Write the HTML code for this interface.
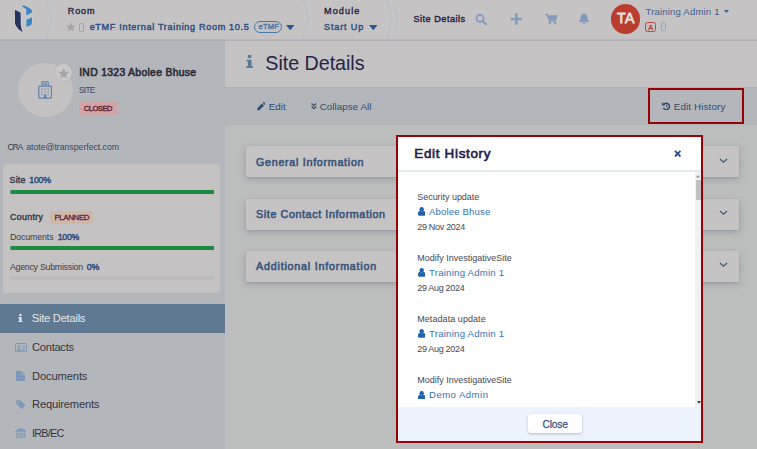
<!DOCTYPE html>
<html lang="en">
<head>
<meta charset="utf-8">
<title>Site Details - Edit History</title>
<style>
*{box-sizing:border-box;margin:0;padding:0}
html,body{width:757px;height:449px;overflow:hidden;background:#bcbebd;font-family:"Liberation Sans","DejaVu Sans",sans-serif;color:#2d2d3a}
.a,.t{position:absolute;white-space:nowrap}
.t{line-height:1}
#page{position:relative;width:757px;height:449px;overflow:hidden;background:#bcbebd}
.card{left:246px;width:493px;height:31px;background:#c5c3c4;border-radius:1.500px;box-shadow:0 2px 7px rgba(75,80,105,.3),0 1px 2px rgba(75,80,105,.12)}
.bar{left:9.5px;width:204.2px;height:4px;border-radius:2px 0 0 2px;background:#1d8b41}
</style>
</head>
<body>
<div id="page">

<!-- ================= HEADER ================= -->
<div class="a" style="left:0;top:0;width:757px;height:39px;background:#c5c3c4"></div>
<div class="a" style="left:0;top:39px;width:225px;height:2px;background:linear-gradient(#b0b3ba 0,#b0b3ba 50%,#a8acb5 50%,#a8acb5 100%)"></div>
<div class="a" style="left:225px;top:39px;width:532px;height:2px;background:linear-gradient(#b9b7bb 0,#b9b7bb 50%,#b2b0b5 50%,#b2b0b5 100%)"></div>
<!-- logo -->
<svg class="a" style="left:0;top:0" width="60" height="40" viewBox="0 0 60 40">
  <g stroke="#d3d1d2" stroke-width="1.400" stroke-linejoin="round" paint-order="stroke">
  <path d="M14.900 9.700 L20.600 12.400 L20.800 25.500 Q21.200 29 22.900 32 Q17 29.200 15 23.800 Z" fill="#25345f"/>
  <path d="M21.300 6.100 L24.400 5.300 L30.400 8.600 Q32 9.600 32 11.200 L32 12.600 L26.200 15.800 L26.200 9.300 Z" fill="#3f86c2"/>
  <path d="M26.200 19.800 L32 17.200 L32 23.300 Q32 24.600 30.600 25.200 L26.500 27 Z" fill="#3f86c2"/>
  </g>
</svg>
<!-- separators -->
<svg class="a" style="left:0;top:0" width="757" height="40" viewBox="0 0 757 40" fill="none" stroke="#b0bbcb" stroke-width=".9">
  <path d="M46.300 0 L51.600 18.500 L45.900 40"/>
  <path d="M303.100 0 L308.700 18.500 L302 40"/>
  <path d="M387 0 L391.900 18.500 L386.600 40"/>
  <path d="M394.500 7.300 L397.800 18.500 L394.500 30.400"/>
</svg>

<div class="t" id="t_room" style="left:67.75px;top:6.90px;font-size:9.1px;-webkit-text-stroke:0.41px #2e2a42;color:#2e2a42;letter-spacing:0.848px">Room</div>
<svg class="a" style="left:65.500px;top:22px" width="10" height="10" viewBox="0 0 24 24"><path d="M12 .8l3.400 7.400 8 .9-6 5.400 1.700 7.900L12 18.400l-7.100 4 1.700-7.900-6-5.400 8-.9z" fill="#a6a5a7"/></svg>
<div class="a" style="left:79.200px;top:23px;width:5.200px;height:8.800px;border:1px solid #8aa5c5;border-width:1.400px 1px;border-radius:1.500px"></div>
<div class="t" id="t_roomname" style="left:89.64px;top:23.00px;font-size:9.1px;-webkit-text-stroke:0.41px #2c4d80;color:#2c4d80;letter-spacing:0.668px">eTMF Internal Training Room 10.5</div>
<div class="a" style="left:254px;top:20.500px;width:28px;height:12.500px;border:1px solid #4a78a6;border-radius:6.500px"></div>
<div class="t" id="t_etmf" style="left:258.53px;top:23.44px;font-size:7.4px;-webkit-text-stroke:0.44px #4b7aa8;color:#4b7aa8;letter-spacing:0.281px">eTMF</div>
<svg class="a" style="left:286px;top:25px" width="8.500" height="5.500" viewBox="0 0 8.500 5.500"><path d="M0 0h8.500L4.250 5.300z" fill="#2a5793"/></svg>

<div class="t" id="t_module" style="left:324.05px;top:6.90px;font-size:9.1px;-webkit-text-stroke:0.41px #2e2a42;color:#2e2a42;letter-spacing:1.096px">Module</div>
<div class="t" id="t_startup" style="left:324.05px;top:23.00px;font-size:9.1px;-webkit-text-stroke:0.41px #2c4d80;color:#2c4d80;letter-spacing:0.836px">Start Up</div>
<svg class="a" style="left:369.200px;top:25px" width="8.500" height="5.500" viewBox="0 0 8.500 5.500"><path d="M0 0h8.500L4.250 5.300z" fill="#2a5793"/></svg>

<div class="t" id="t_sd" style="left:413.44px;top:14.70px;font-size:9.1px;-webkit-text-stroke:0.41px #2a2445;color:#2a2445;letter-spacing:0.519px">Site Details</div>

<!-- search -->
<svg class="a" style="left:475px;top:13px" width="13" height="13" viewBox="0 0 13 13"><circle cx="5" cy="5.300" r="3.500" fill="none" stroke="#859ebf" stroke-width="1.900"/><path d="M7.900 8.300L10.900 11.300" stroke="#859ebf" stroke-width="2.300" stroke-linecap="round"/></svg>
<!-- plus -->
<svg class="a" style="left:510px;top:12px" width="13" height="14" viewBox="0 0 13 14"><path d="M6.400 1.200v11.500M.7 6.950h11.400" stroke="#829bbd" stroke-width="2.400"/></svg>
<!-- cart -->
<svg class="a" style="left:545px;top:13px" width="13" height="12" viewBox="0 0 13 12"><path d="M.5 .9h2.200l.5 1.400h9.300l-1.400 5.200H4.300z" fill="#829bbd"/><path d="M.5 1.300h1.900l2 7.200h6.600" fill="none" stroke="#829bbd" stroke-width="1.200"/><circle cx="4.900" cy="10.300" r="1.200" fill="#829bbd"/><circle cx="10.100" cy="10.300" r="1.200" fill="#829bbd"/></svg>
<!-- bell -->
<svg class="a" style="left:578.500px;top:13px" width="10" height="12" viewBox="0 0 10 12"><path d="M5 .1c.6 0 .9.400.9.900 1.700.5 2.600 1.900 2.600 3.700 0 2.100.7 3 1.400 3.700v.9H.1v-.9C.8 7.700 1.500 6.800 1.500 4.700c0-1.800.9-3.200 2.600-3.700 0-.5.300-.9.900-.9z" fill="#829bbd"/><path d="M3.600 10.100h2.800a1.400 1.400 0 0 1-2.800 0z" fill="#829bbd"/></svg>

<!-- avatar -->
<div class="a" style="left:610.800px;top:4.300px;width:29.400px;height:29.400px;border-radius:15px;background:#b93e30"></div>
<div class="t" id="t_ta" style="left:617.10px;top:11.45px;font-size:14.0px;-webkit-text-stroke:0.84px #e9dedb;color:#e9dedb;letter-spacing:0.441px">TA</div>
<div class="t" id="t_admin" style="left:645.52px;top:6.77px;font-size:9.6px;color:#3f5f8f;letter-spacing:0.155px">Training Admin 1</div>
<svg class="a" style="left:724.200px;top:10.300px" width="5" height="3.200" viewBox="0 0 5 3.200"><path d="M0 0h5L2.500 3z" fill="#3f5f8f"/></svg>
<div class="a" style="left:645.300px;top:21.800px;width:10.800px;height:10px;border:1px solid #b8483f;border-radius:2.500px"></div>
<div class="t" id="t_abadge" style="left:648.24px;top:23.51px;font-size:7.2px;-webkit-text-stroke:0.43px #b8483f;color:#b8483f;letter-spacing:0.000px">A</div>
<div class="a" style="left:661px;top:22.300px;width:5.200px;height:8.400px;border:1px solid #8aa5c5;border-width:1.400px 1px;border-radius:1.500px"></div>

<!-- ================= SIDEBAR ================= -->
<div class="a" style="left:0;top:41px;width:225px;height:408px;background:#b3b7bc"></div>
<div class="a" style="left:18px;top:62.500px;width:54.600px;height:54.600px;border-radius:28px;background:#c3c1c2"></div>
<!-- building icon -->
<svg class="a" style="left:38.200px;top:80.700px" width="14.300" height="18" viewBox="0 0 14.300 18" fill="none" stroke="#6283a7">
  <path d="M4.100 5.200V.7h6.100v4.500" stroke-width="1.100"/>
  <rect x=".8" y="5.200" width="12.700" height="12" rx=".8" stroke-width="1.200"/>
  <path d="M6 1.700v2.700M8.300 1.700v2.700M6 3.050h2.300" stroke-width=".9"/>
  <path d="M3.300 8.200h1.500M6.400 8.200h1.500M9.500 8.200h1.500M3.300 10.800h1.500M6.400 10.800h1.500M9.500 10.800h1.500M3.300 13.400h1.500M9.500 13.400h1.500" stroke-width="1.300" stroke="#7b97b7"/>
  <rect x="5.900" y="13.500" width="2.500" height="3.700" fill="#5b7fa5" stroke="none"/>
</svg>
<!-- star -->
<div class="a" style="left:54.800px;top:63.900px;width:17.400px;height:17.400px;border-radius:9px;background:#c9c7c8;box-shadow:0 0 2px rgba(60,60,70,.12)"></div>
<svg class="a" style="left:57.500px;top:67.700px" width="11.500" height="10.800" viewBox="0 0 24 23"><path d="M12 .5l3.400 7.400 8 .9-6 5.400 1.700 7.900L12 18.100l-7.100 4 1.700-7.900-6-5.400 8-.9z" fill="#a5a4a6"/></svg>

<div class="t" id="t_ind" style="left:79.18px;top:68.00px;font-size:10.4px;-webkit-text-stroke:0.60px #2d2c38;color:#2d2c38;letter-spacing:0.301px">IND 1323 Abolee Bhuse</div>
<div class="t" id="t_site" style="left:79.08px;top:85.97px;font-size:8.3px;color:#3d4766;letter-spacing:-0.741px">SITE</div>
<div class="a" style="left:79px;top:101.300px;width:37.600px;height:14px;border-radius:3px;background:#d1a4a5"></div>
<div class="t" id="t_closed" style="left:83.72px;top:105.35px;font-size:7.5px;-webkit-text-stroke:0.34px #5e1a30;color:#5e1a30;letter-spacing:-0.439px">CLOSED</div>

<div class="t" id="t_cra" style="left:7.47px;top:143.12px;font-size:8.6px;color:#3b3d48;letter-spacing:-1.148px">CRA</div>
<div class="t" id="t_mail" style="left:26.26px;top:142.95px;font-size:8.8px;color:#3a4668;letter-spacing:-0.054px">atote@transperfect.com</div>

<div class="a" style="left:2.500px;top:163.800px;width:217.400px;height:129.500px;border-radius:4px;background:#c4c2c3"></div>
<div class="t" id="t_s1" style="left:9.56px;top:175.85px;font-size:8.8px;-webkit-text-stroke:0.44px #3b3d48;color:#3b3d48;letter-spacing:0.236px">Site</div>
<div class="t" id="t_p1" style="left:29.26px;top:175.85px;font-size:8.8px;-webkit-text-stroke:0.44px #2f4a78;color:#2f4a78;letter-spacing:-0.240px">100%</div>
<div class="a bar" style="top:189.500px"></div>

<div class="t" id="t_country" style="left:9.96px;top:212.95px;font-size:8.8px;-webkit-text-stroke:0.44px #3b3d48;color:#3b3d48;letter-spacing:0.378px">Country</div>
<div class="a" style="left:50.100px;top:210.900px;width:43px;height:12.800px;border-radius:3px;background:#cfb8a9"></div>
<div class="t" id="t_planned" style="left:54.40px;top:213.81px;font-size:7.9px;-webkit-text-stroke:0.28px #5a2040;color:#5a2040;letter-spacing:-0.365px">PLANNED</div>

<div class="t" id="t_docs" style="left:9.96px;top:232.65px;font-size:8.8px;color:#3b3d48;letter-spacing:-0.115px">Documents</div>
<div class="t" id="t_p2" style="left:57.76px;top:232.65px;font-size:8.8px;-webkit-text-stroke:0.44px #2f4a78;color:#2f4a78;letter-spacing:-0.307px">100%</div>
<div class="a bar" style="top:246.300px"></div>

<div class="t" id="t_agency" style="left:9.96px;top:262.85px;font-size:8.8px;color:#3b3d48;letter-spacing:-0.255px">Agency Submission</div>
<div class="t" id="t_p3" style="left:86.76px;top:262.85px;font-size:8.8px;-webkit-text-stroke:0.44px #2f4a78;color:#2f4a78;letter-spacing:-0.139px">0%</div>
<div class="a bar" style="top:276.300px;background:#bcbabb"></div>

<!-- nav -->
<div class="a" style="left:0;top:304px;width:225.400px;height:28.700px;background:#5f7993"></div>
<svg class="a" style="left:18px;top:313.500px" width="4.800" height="8.500" viewBox="0 0 5 9"><path d="M1.300 0h2.400v2H1.300zM.3 3.200h3.500v4.500h1V9H.2V7.700h1.100V4.500H.3z" fill="#e3e7ec"/></svg>
<div class="t" id="t_n1" style="left:31.74px;top:312.82px;font-size:11.2px;color:#e3e7ec;letter-spacing:-0.261px">Site Details</div>
<svg class="a" style="left:14.700px;top:342.500px" width="12" height="9.300" viewBox="0 0 12 9.300"><rect x=".5" y=".5" width="11" height="8.300" rx=".8" fill="none" stroke="#7d98b8" stroke-width="1"/><circle cx="3.900" cy="3.500" r="1.200" fill="#7d98b8"/><path d="M2 6.900c0-2 3.800-2 3.800 0z" fill="#7d98b8"/><path d="M7 3.200h3.300M7 5.200h3.300M2 7.600h8.300" stroke="#7d98b8" stroke-width=".8"/></svg>
<div class="t" id="t_n2" style="left:32.04px;top:342.02px;font-size:11.2px;color:#35353f;letter-spacing:-0.305px">Contacts</div>
<svg class="a" style="left:15.500px;top:370.500px" width="9.500" height="10.500" viewBox="0 0 9.500 10.500"><path d="M0 0h5.800L9.500 3.700V10.500H0z" fill="#7d98b8"/><path d="M5.800 0v3.700H9.500" fill="none" stroke="#b3b7bc" stroke-width=".8"/></svg>
<div class="t" id="t_n3" style="left:32.04px;top:370.92px;font-size:11.2px;color:#35353f;letter-spacing:-0.147px">Documents</div>
<svg class="a" style="left:15.500px;top:399.800px" width="9.700" height="9.400" viewBox="0 0 9.700 9.400"><path d="M.3 .3h4l5.200 4.900-3.700 3.900L.3 4z" fill="#7d98b8"/><circle cx="2.300" cy="2.300" r=".8" fill="#b3b7bc"/></svg>
<div class="t" id="t_n4" style="left:32.04px;top:398.82px;font-size:11.2px;color:#35353f;letter-spacing:-0.203px">Requirements</div>
<svg class="a" style="left:14.700px;top:427.800px" width="11.700" height="10.500" viewBox="0 0 11.700 10.500"><path d="M5.850 0L11.500 2.700V3.800H.2V2.700zM1.400 4.500h1.700v3.800H1.400zM4.100 4.500h1.300v3.800H4.100zM6.300 4.500h1.300v3.800H6.300zM8.600 4.500h1.700v3.800H8.600zM.7 8.800h10.300v.7H.7zM0 9.800h11.700v.7H0z" fill="#7d98b8"/></svg>
<div class="t" id="t_n5" style="left:32.06px;top:427.86px;font-size:10.8px;color:#35353f;letter-spacing:-0.744px">IRB/EC</div>

<!-- ================= MAIN ================= -->
<div class="a" style="left:225px;top:41px;width:532px;height:47px;background:#c4c2c3;border-bottom:1px solid #adb0b8"></div>
<svg class="a" style="left:245.700px;top:55.400px" width="7.100" height="13" viewBox="0 0 7 13"><path d="M1.800 0h3.400v3H1.800zM.3 4.700h5.200v6.500H7V13H.2v-1.800h1.600V6.500H.3z" fill="#5b7896"/></svg>
<div class="t" id="t_title" style="left:265.31px;top:54.12px;font-size:19.7px;color:#262248;letter-spacing:-0.028px">Site Details</div>

<div class="a" style="left:225px;top:88px;width:532px;height:37.2px;background:#b3b7bc"></div>
<svg class="a" style="left:256.700px;top:102px" width="8.600" height="8.600" viewBox="0 0 9 9"><path d="M0 9l.5-2.700L5.200 1.600l2.200 2.200L2.700 8.500zM5.900 .9l.6-.6a.8.800 0 0 1 1.200 0l1 1a.8.800 0 0 1 0 1.200l-.6.600z" fill="#3a4c6e"/></svg>
<div class="t" id="t_edit" style="left:268.81px;top:102.20px;font-size:9.8px;color:#36486c;letter-spacing:0.030px">Edit</div>
<svg class="a" style="left:311px;top:103px" width="5.800" height="6.600" viewBox="0 0 6 7"><path d="M.5 .5L3 2.800 5.500 .5M.5 3.700L3 6 5.500 3.700" fill="none" stroke="#3a4c6e" stroke-width="1.350"/></svg>
<div class="t" id="t_collapse" style="left:319.71px;top:102.20px;font-size:9.8px;color:#36486c;letter-spacing:0.043px">Collapse All</div>

<div class="a" style="left:648px;top:88px;width:96px;height:36px;border:2px solid #990205"></div>
<svg class="a" style="left:661.800px;top:101.700px" width="8.800" height="8.800" viewBox="0 0 9 9"><path d="M2 2.300A3.300 3.300 0 1 1 1.400 6" fill="none" stroke="#34466a" stroke-width="1.450"/><path d="M-.1 .3l.3 3.600 3.400-.8z" fill="#34466a"/><path d="M4.700 2.800v2l1.300.8" fill="none" stroke="#34466a" stroke-width="1"/></svg>
<div class="t" id="t_eh" style="left:673.71px;top:102.20px;font-size:9.8px;color:#36486c;letter-spacing:0.144px">Edit History</div>

<div class="a card" style="top:146px"></div>
<div class="a card" style="top:198.500px"></div>
<div class="a card" style="top:250.500px"></div>
<div class="t" id="t_c1" style="left:256.06px;top:157.24px;font-size:10.7px;-webkit-text-stroke:0.62px #3c587c;color:#3c587c;letter-spacing:0.722px">General Information</div>
<div class="t" id="t_c2" style="left:256.06px;top:208.94px;font-size:10.7px;-webkit-text-stroke:0.62px #3c587c;color:#3c587c;letter-spacing:0.622px">Site Contact Information</div>
<div class="t" id="t_c3" style="left:256.06px;top:260.94px;font-size:10.7px;-webkit-text-stroke:0.62px #3c587c;color:#3c587c;letter-spacing:0.800px">Additional Information</div>
<svg class="a" style="left:719px;top:157.500px" width="9" height="6" viewBox="0 0 9 6"><path d="M1 1l3.500 3.300L8 1" fill="none" stroke="#3c587c" stroke-width="1.200"/></svg>
<svg class="a" style="left:719px;top:210px" width="9" height="6" viewBox="0 0 9 6"><path d="M1 1l3.500 3.300L8 1" fill="none" stroke="#3c587c" stroke-width="1.200"/></svg>
<svg class="a" style="left:719px;top:262px" width="9" height="6" viewBox="0 0 9 6"><path d="M1 1l3.500 3.300L8 1" fill="none" stroke="#3c587c" stroke-width="1.200"/></svg>

<!-- ================= MODAL ================= -->
<div class="a" style="left:396px;top:135px;width:307px;height:308px;background:#990205"></div>
<div class="a" style="left:398.400px;top:137px;width:302.600px;height:303.700px;background:#fff"></div>
<div class="a" style="left:398.400px;top:170.200px;width:302.600px;height:1.400px;background:#e5eaf2"></div>
<div class="t" id="t_mh" style="left:414.33px;top:147.36px;font-size:13.4px;-webkit-text-stroke:0.67px #231f55;color:#231f55;letter-spacing:0.697px">Edit History</div>
<svg class="a" style="left:673.600px;top:150px" width="7.400" height="7.400" viewBox="0 0 8 8"><path d="M1 1l6 6M7 1L1 7" stroke="#2c5490" stroke-width="2.100"/></svg>

<!-- scrollbar -->
<div class="a" style="left:694.500px;top:171.600px;width:6.500px;height:235.800px;background:#f1f1f1"></div>
<svg class="a" style="left:696.200px;top:175px" width="4" height="2.600" viewBox="0 0 4 2.600"><path d="M0 2.600L2 0l2 2.600z" fill="#8c8c8c"/></svg>
<div class="a" style="left:696.200px;top:180.200px;width:4.800px;height:19.600px;background:#c1c1c1"></div>
<svg class="a" style="left:696.500px;top:401px" width="4" height="2.800" viewBox="0 0 4 2.800"><path d="M0 0h4L2 2.800z" fill="#404040"/></svg>

<div class="t" id="t_e1a" style="left:417.25px;top:192.58px;font-size:9px;color:#484852;letter-spacing:-0.039px">Security update</div>
<svg class="a" style="left:417.700px;top:207.3px" width="7.400" height="8.700" viewBox="0 0 7.400 8.700"><circle cx="3.700" cy="2.200" r="2.200" fill="#2262ad"/><path d="M0 7.600V6.300C0 4.700 1 3.900 2.100 3.800c.4.500 1 .8 1.600.8s1.200-.3 1.600-.8C6.400 3.900 7.400 4.700 7.400 6.300v1.300c0 .7-.5 1.100-1.100 1.100H1.100C.5 8.700 0 8.300 0 7.600z" fill="#2262ad"/></svg>
<div class="t" id="t_e1b" style="left:429.02px;top:207.07px;font-size:9.6px;color:#3373b8;letter-spacing:0.137px">Abolee Bhuse</div>
<div class="t" id="t_e1c" style="left:417.25px;top:222.78px;font-size:9px;color:#484852;letter-spacing:-0.305px">29 Nov 2024</div>

<div class="t" id="t_e2a" style="left:417.25px;top:254.08px;font-size:9px;color:#484852;letter-spacing:-0.002px">Modify InvestigativeSite</div>
<svg class="a" style="left:417.700px;top:268.3px" width="7.400" height="8.700" viewBox="0 0 7.400 8.700"><circle cx="3.700" cy="2.200" r="2.200" fill="#2262ad"/><path d="M0 7.600V6.300C0 4.700 1 3.900 2.100 3.800c.4.500 1 .8 1.600.8s1.200-.3 1.600-.8C6.400 3.900 7.400 4.700 7.400 6.300v1.300c0 .7-.5 1.100-1.100 1.100H1.100C.5 8.700 0 8.300 0 7.600z" fill="#2262ad"/></svg>
<div class="t" id="t_e2b" style="left:429.02px;top:268.07px;font-size:9.6px;color:#3373b8;letter-spacing:0.235px">Training Admin 1</div>
<div class="t" id="t_e2c" style="left:417.25px;top:283.98px;font-size:9px;color:#484852;letter-spacing:-0.316px">29 Aug 2024</div>

<div class="t" id="t_e3a" style="left:417.25px;top:314.58px;font-size:9px;color:#484852;letter-spacing:0.060px">Metadata update</div>
<svg class="a" style="left:417.700px;top:329.3px" width="7.400" height="8.700" viewBox="0 0 7.400 8.700"><circle cx="3.700" cy="2.200" r="2.200" fill="#2262ad"/><path d="M0 7.600V6.300C0 4.700 1 3.900 2.100 3.800c.4.500 1 .8 1.600.8s1.200-.3 1.600-.8C6.400 3.900 7.400 4.700 7.400 6.300v1.300c0 .7-.5 1.100-1.100 1.100H1.100C.5 8.700 0 8.300 0 7.600z" fill="#2262ad"/></svg>
<div class="t" id="t_e3b" style="left:429.02px;top:329.17px;font-size:9.6px;color:#3373b8;letter-spacing:0.235px">Training Admin 1</div>
<div class="t" id="t_e3c" style="left:417.25px;top:344.88px;font-size:9px;color:#484852;letter-spacing:-0.316px">29 Aug 2024</div>

<div class="t" id="t_e4a" style="left:417.25px;top:375.58px;font-size:9px;color:#484852;letter-spacing:-0.002px">Modify InvestigativeSite</div>
<svg class="a" style="left:417.700px;top:390.5px" width="7.400" height="8.700" viewBox="0 0 7.400 8.700"><circle cx="3.700" cy="2.200" r="2.200" fill="#2262ad"/><path d="M0 7.600V6.300C0 4.700 1 3.900 2.100 3.800c.4.500 1 .8 1.600.8s1.200-.3 1.600-.8C6.400 3.900 7.400 4.700 7.400 6.300v1.300c0 .7-.5 1.100-1.100 1.100H1.100C.5 8.700 0 8.300 0 7.600z" fill="#2262ad"/></svg>
<div class="t" id="t_e4b" style="left:429.02px;top:390.37px;font-size:9.6px;color:#3373b8;letter-spacing:0.449px">Demo Admin</div>

<div class="a" style="left:398.400px;top:407.400px;width:302.600px;height:33.300px;background:#edf3fb"></div>
<div class="a" style="left:527.700px;top:414.300px;width:54.400px;height:19.200px;border-radius:3px;background:#fff;box-shadow:0 1px 2.500px rgba(70,90,130,.35)"></div>
<div class="t" id="t_close" style="left:542.59px;top:419.97px;font-size:10.2px;-webkit-text-stroke:0.26px #3a5585;color:#3a5585;letter-spacing:-0.182px">Close</div>

</div>
</body>
</html>
